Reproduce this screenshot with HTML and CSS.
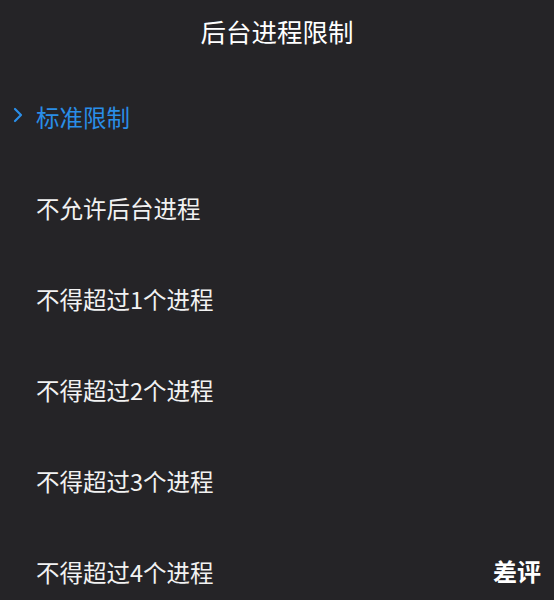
FILE: index.html
```html
<!DOCTYPE html>
<html lang="zh">
<head>
<meta charset="utf-8">
<link rel="stylesheet" href="styles.css">
</head>
<body>
<div class="screen">
  <header class="title">后台进程限制</header>
  <ul class="list">
    <li class="item active">
      <svg class="chev" width="10" height="16" viewBox="0 0 10 16"><path d="M2 2 L8 8 L2 14" fill="none" stroke="#2a8ee8" stroke-width="2.2" stroke-linecap="round" stroke-linejoin="round"/></svg>
      <span>标准限制</span>
    </li>
    <li class="item"><span>不允许后台进程</span></li>
    <li class="item"><span>不得超过1个进程</span></li>
    <li class="item"><span>不得超过2个进程</span></li>
    <li class="item"><span>不得超过3个进程</span></li>
    <li class="item"><span>不得超过4个进程</span></li>
  </ul>
  <div class="badge">差评</div>
</div>
</body>
</html>
```
FILE: styles.css
```css
html, body {
  margin: 0;
  padding: 0;
  background: #252427;
}
.screen {
  position: relative;
  width: 554px;
  height: 600px;
  overflow: hidden;
  background: #252427;
  font-family: "Noto Sans CJK SC", "Noto Sans", sans-serif;
  color: #f2f2f2;
}
.title {
  height: 60px;
  display: flex;
  align-items: center;
  justify-content: center;
  font-size: 25.5px;
  color: #ffffff;
}
.list {
  list-style: none;
  margin: 0;
  padding: 11px 0 0 0;
}
.item {
  height: 91px;
  display: flex;
  align-items: center;
  padding-left: 36px;
  position: relative;
  font-size: 23.5px;
}
.item.active {
  color: #2a8ee8;
}
.chev {
  position: absolute;
  left: 13px;
  top: 50%;
  margin-top: -10px;
}
.badge {
  position: absolute;
  right: 13px;
  bottom: 12px;
  font-size: 24px;
  font-weight: 700;
  color: #ffffff;
}
```
